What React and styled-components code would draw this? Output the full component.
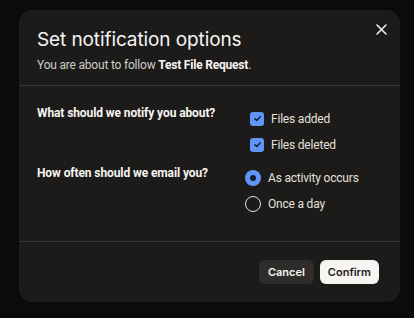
import React from "react";
import styled, { createGlobalStyle } from "styled-components";

const Global = createGlobalStyle`
  html, body { margin: 0; padding: 0; background: #0b0b0b; }
  body { font-family: Roboto, "Noto Sans", "Liberation Sans", sans-serif; -webkit-font-smoothing: antialiased; }
  * { box-sizing: border-box; }
`;

const Page = styled.div`
  width: 414px;
  height: 318px;
  padding: 10px 0 0 19px;
  background: #0b0b0b;
`;

const Dialog = styled.div`
  position: relative;
  width: 381px;
  height: 292px;
  background: #1c1b1a;
  border-radius: 13px;
  display: flex;
  flex-direction: column;
`;

const Header = styled.div`
  padding: 18px 18px 11px;
  border-bottom: 1px solid #3a3836;
`;

const Title = styled.h1`
  margin: 0;
  font-family: Inter, "Noto Sans", sans-serif;
  font-size: 19px;
  line-height: 24px;
  font-weight: 400;
  color: #f7f5f2;
  letter-spacing: -0.1px;
`;

const Subtitle = styled.p`
  margin: 4px 0 0;
  font-size: 12px;
  line-height: 18px;
  letter-spacing: -0.2px;
  color: #cfcbc6;
  strong { color: #f7f5f2; font-weight: 700; }
`;

const CloseButton = styled.button`
  position: absolute;
  top: 7px;
  right: 7px;
  width: 24px;
  height: 24px;
  padding: 0;
  border: 0;
  background: transparent;
  display: flex;
  align-items: center;
  justify-content: center;
  color: #f7f5f2;
`;

const Body = styled.div`
  flex: 1;
  padding: 18px 18px 0;
  border-bottom: 1px solid #3a3836;
  display: grid;
  grid-template-columns: 208px 1fr;
  row-gap: 6px;
  align-content: start;
`;

const Question = styled.div`
  font-size: 12px;
  line-height: 18px;
  font-weight: 700;
  letter-spacing: -0.1px;
  color: #f7f5f2;
`;

const Options = styled.div`
  display: flex;
  flex-direction: column;
  padding-top: ${(p) => p.$top}px;
  padding-left: ${(p) => p.$indent}px;
`;

const Option = styled.label`
  height: 26px;
  display: flex;
  align-items: center;
  gap: ${(p) => p.$gap}px;
  font-size: 12px;
  letter-spacing: -0.2px;
  color: #e4e0db;
`;

const Box = styled.span`
  width: 14px;
  height: 14px;
  border-radius: 3px;
  background: #5f95f7;
  display: flex;
  align-items: center;
  justify-content: center;
`;

const Radio = styled.span`
  width: 16px;
  height: 16px;
  border-radius: 50%;
  display: flex;
  align-items: center;
  justify-content: center;
  background: ${(p) => (p.$on ? "#5f95f7" : "transparent")};
  border: ${(p) => (p.$on ? "none" : "1.5px solid #e4e0db")};
  &::after {
    content: "";
    display: ${(p) => (p.$on ? "block" : "none")};
    width: 6px;
    height: 6px;
    border-radius: 50%;
    background: #141c2c;
  }
`;

const Footer = styled.div`
  padding: 18px 21px 18px;
  display: flex;
  justify-content: flex-end;
  gap: 6px;
`;

const Button = styled.button`
  height: 24px;
  padding: 0 ${(p) => (p.$primary ? 8 : 9)}px;
  border: 0;
  border-radius: 6px;
  font-family: Inter, "Noto Sans", sans-serif;
  font-size: 11px;
  font-weight: 600;
  background: ${(p) => (p.$primary ? "#f7f5f2" : "#2f2d2b")};
  color: ${(p) => (p.$primary ? "#1c1b1a" : "#f7f5f2")};
`;

const Check = () => (
  <svg width="9" height="9" viewBox="0 0 10 10">
    <path d="M2 5.2 L4.2 7.2 L8 3" fill="none" stroke="#141c2c" strokeWidth="1.6" strokeLinecap="round" strokeLinejoin="round" />
  </svg>
);

export default function App() {
  return (
    <>
      <Global />
      <Page>
        <Dialog>
          <CloseButton aria-label="Close">
            <svg width="11" height="11" viewBox="0 0 11 11">
              <path d="M1 1 L10 10 M10 1 L1 10" stroke="currentColor" strokeWidth="1.5" strokeLinecap="round" />
            </svg>
          </CloseButton>
          <Header>
            <Title>Set notification options</Title>
            <Subtitle>
              You are about to follow <strong>Test File Request</strong>.
            </Subtitle>
          </Header>
          <Body>
            <Question>What should we notify you about?</Question>
            <Options $top={1.5} $indent={5}>
              <Option $gap={7}><Box><Check /></Box>Files added</Option>
              <Option $gap={7}><Box><Check /></Box>Files deleted</Option>
            </Options>
            <Question>How often should we email you?</Question>
            <Options $top={1.5} $indent={0}>
              <Option $gap={7}><Radio $on />As activity occurs</Option>
              <Option $gap={7}><Radio />Once a day</Option>
            </Options>
          </Body>
          <Footer>
            <Button>Cancel</Button>
            <Button $primary>Confirm</Button>
          </Footer>
        </Dialog>
      </Page>
    </>
  );
}
